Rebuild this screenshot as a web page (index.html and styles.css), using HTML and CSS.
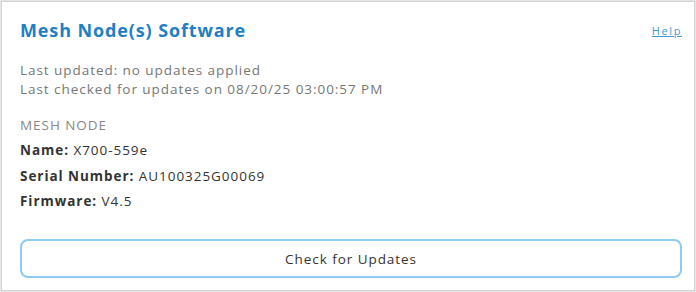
FILE: index.html
```html
<!DOCTYPE html>
<html lang="en">
<head>
  <meta charset="UTF-8" />
  <title>Mesh Node(s) Software</title>
  <link rel="stylesheet" href="styles.css">
</head>
<body>
  <div class="card">
    <div class="card-header">
      <h2 class="title">Mesh Node(s) Software</h2>
      <a class="help" href="#">Help</a>
    </div>

    <div class="status">
      <div>Last updated: no updates applied</div>
      <div>Last checked for updates on 08/20/25 03:00:57 PM</div>
    </div>

    <div class="node">
      <div class="node-row node-heading">MESH NODE</div>
      <div class="node-row"><b>Name:</b> X700-559e</div>
      <div class="node-row"><b>Serial Number:</b> AU100325G00069</div>
      <div class="node-row"><b>Firmware:</b> V4.5</div>
    </div>

    <button class="check-btn">Check for Updates</button>
  </div>
</body>
</html>
```

FILE: styles.css
```css
* {
  box-sizing: border-box;
}
body {
  margin: 0;
  background: #e6e6e6;
  font-family: 'Open Sans', sans-serif;
}
.card {
  margin: 1px;
  height: 290px;
  background: #fff;
  border: 1px solid #d4d4d4;
  padding: 16px 12px 12px 18px;
  display: flex;
  flex-direction: column;
  letter-spacing: 0.95px;
}
.card-header {
  display: flex;
  justify-content: space-between;
  align-items: center;
}
.title {
  margin: 0;
  font-size: 18px;
  font-weight: 700;
  letter-spacing: 0.88px;
  color: #1e7fc4;
}
.help {
  font-size: 11px;
  letter-spacing: 1.6px;
  color: #3a9ad9;
  text-decoration: underline;
}
.status {
  margin-top: 19px;
  font-size: 13.5px;
  line-height: 19px;
  color: #777;
}
.node {
  margin-top: 14px;
  font-size: 13.5px;
  color: #333;
}
.node-heading {
  color: #888;
}
.node-row {
  line-height: 25.4px;
}
.node-row b {
  font-weight: 700;
}
.check-btn {
  margin-top: auto;
  width: 100%;
  height: 39px;
  background: #fff;
  border: 2px solid #8fcaf3;
  border-radius: 8px;
  font-family: 'Open Sans', sans-serif;
  font-size: 13.5px;
  letter-spacing: 0.95px;
  color: #333;
}
```
